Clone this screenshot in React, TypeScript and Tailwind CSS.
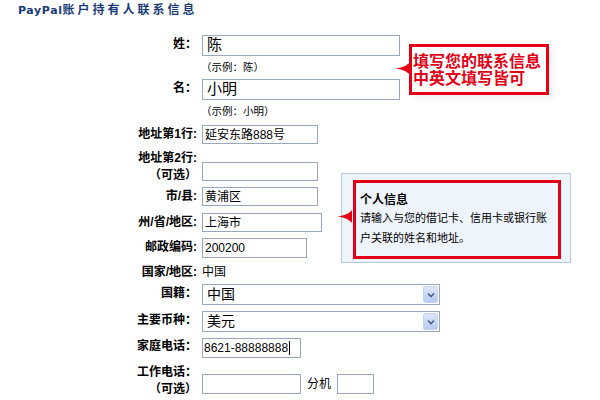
import React from 'react';

const cjk = "font-['Liberation_Sans','Noto_Sans_CJK_SC',sans-serif]";

type RowProps = {
    label: React.ReactNode;
    children?: React.ReactNode;
    className?: string;
    labelClass?: string;
    fieldClass?: string;
};

function Row({ label, children, className = '', labelClass = '', fieldClass = '' }: RowProps) {
    return (
        <div className={`flex ${className}`}>
            <div className={`w-[197px] shrink-0 text-right text-[12px] font-bold text-black ${labelClass}`}>{label}</div>
            <div className={`ml-[5px] flex items-start ${fieldClass}`}>{children}</div>
        </div>
    );
}

function TextBox({ value, className = '', textClass = 'text-[12px] pl-[2px]' }: { value?: string; className?: string; textClass?: string }) {
    return (
        <div className={`flex items-center border border-[#98a8bf] bg-white text-black ${className}`}>
            <span className={`whitespace-nowrap ${textClass}`}>{value}</span>
        </div>
    );
}

function SelectBox({ value }: { value: string }) {
    return (
        <div className="flex h-[21px] w-[238px] items-stretch border border-[#98a8bf] bg-white">
            <span className="flex-1 pl-[4px] text-[14px] leading-[19px] text-black">{value}</span>
            <div className="my-[1px] mr-[1px] flex w-[15px] items-center justify-center rounded-[2px] border border-[#c6d4f4] bg-gradient-to-b from-[#dde7fb] to-[#b8cbf2]">
                <svg width="8" height="6" viewBox="0 0 8 6">
                    <path d="M1 1.5 L4 4.5 L7 1.5" fill="none" stroke="#4c5f86" strokeWidth="1.6" />
                </svg>
            </div>
        </div>
    );
}

function Arrow({ className = '' }: { className?: string }) {
    return (
        <svg className={className} width="15" height="13" viewBox="0 0 15 13">
            <path d="M15 0 C12 4 6 5.8 0 6.5 C6 7.2 12 9 15 13 Z" fill="#e30016" />
        </svg>
    );
}

export default function App() {
    return (
        <div className={`relative h-[400px] w-[600px] overflow-hidden bg-white ${cjk}`}>
            {/* Title */}
            <div className="h-[35px] pl-[18px] pt-[1px] font-bold leading-[16px] text-[#193b78]">
                <span className="font-['DejaVu_Sans',sans-serif] text-[11px] tracking-[0.6px]">PayPal</span>
                <span className="text-[12px] tracking-[3px]">账户持有人联系信息</span>
            </div>

            <Row label="姓：" labelClass="pt-[1px] leading-[16px]">
                <TextBox value="陈" className="h-[21px] w-[198px]" textClass="text-[15px] pl-[4px]" />
            </Row>
            <div className="ml-[201px] mt-[4px] text-[10.5px] leading-[14px] text-black">（示例：陈）</div>

            <Row label="名：" className="mt-[5px]" labelClass="pt-[1px] leading-[16px]">
                <TextBox value="小明" className="h-[21px] w-[198px]" textClass="text-[15px] pl-[4px]" />
            </Row>
            <div className="ml-[201px] mt-[4px] text-[10.5px] leading-[14px] text-black">（示例：小明）</div>

            <Row label="地址第1行:" className="mt-[7px]" labelClass="leading-[19px]">
                <TextBox value="延安东路888号" className="h-[19px] w-[116px]" />
            </Row>

            <Row
                label={<>地址第2行:<br />（可选）</>}
                className="mt-[6px]"
                labelClass="leading-[17px]"
                fieldClass="pt-[12px]"
            >
                <TextBox className="h-[19px] w-[116px]" />
            </Row>

            <Row label="市/县:" className="mt-[3px]" labelClass="leading-[19px]">
                <TextBox value="黄浦区" className="h-[19px] w-[116px]" />
            </Row>

            <Row label="州/省/地区:" className="mt-[7px]" labelClass="leading-[19px]">
                <TextBox value="上海市" className="h-[19px] w-[120px]" />
            </Row>

            <Row label="邮政编码:" className="mt-[6px]" labelClass="leading-[18px]">
                <TextBox value="200200" className="h-[20px] w-[105px]" textClass="text-[12px] pl-[2px] font-['Liberation_Sans',sans-serif]" />
            </Row>

            <Row label="国家/地区:" className="mt-[6px]" labelClass="leading-[16px]">
                <span className="text-[12px] leading-[16px] text-black">中国</span>
            </Row>

            <Row label="国籍：" className="mt-[4px]" labelClass="leading-[18px]">
                <SelectBox value="中国" />
            </Row>

            <Row label="主要币种：" className="mt-[6px]" labelClass="leading-[18px]">
                <SelectBox value="美元" />
            </Row>

            <Row label="家庭电话：" className="mt-[6px]" labelClass="leading-[16px]">
                <div className="flex h-[20px] w-[99px] items-center border border-[#98a8bf] bg-white pl-[1px]">
                    <span className="font-['Liberation_Sans',sans-serif] text-[12px] text-black">8621-88888888</span>
                    <span className="ml-[1px] h-[14px] w-px bg-black" />
                </div>
            </Row>

            <Row
                label={<>工作电话：<br />（可选）</>}
                className="mt-[6px]"
                labelClass="leading-[17px]"
                fieldClass="pt-[10px]"
            >
                <TextBox className="h-[20px] w-[99px]" />
                <span className="mx-[6px] mt-[3px] text-[12px] leading-[14px] text-black">分机</span>
                <TextBox className="h-[20px] w-[37px]" />
            </Row>

            <Row label="出生日期：" className="mt-[4px]" labelClass="leading-[16px]" />

            {/* Callout: contact info */}
            <div className="absolute left-[409px] top-[44px] h-[51px] w-[140px] border-[3px] border-[#e30016] bg-white pl-[1px] pt-[6px] text-[16px] font-bold leading-[17px] text-[#e30016] shadow-[5px_5px_6px_rgba(0,0,0,0.05)]">
                <Arrow className="absolute left-[-17px] top-[15px]" />
                <div className="whitespace-nowrap">填写您的联系信息</div>
                <div className="whitespace-nowrap">中英文填写皆可</div>
            </div>

            {/* Callout: personal info */}
            <div className="absolute left-[341px] top-[173px] h-[90px] w-[230px] border border-[#b7c8de] bg-[#eef4fc] pl-[11px] pt-[6px]">
                <div className="relative h-[79px] w-[208px] border-[3px] border-[#e30016] pl-[4px] pt-[9px] text-black">
                    <Arrow className="absolute left-[-19px] top-[27px]" />
                    <div className="text-[12px] font-bold leading-[16px]">个人信息</div>
                    <div className="text-[11px] leading-[20px]">
                        请输入与您的借记卡、信用卡或银行账<br />户关联的姓名和地址。
                    </div>
                </div>
            </div>
        </div>
    );
}
